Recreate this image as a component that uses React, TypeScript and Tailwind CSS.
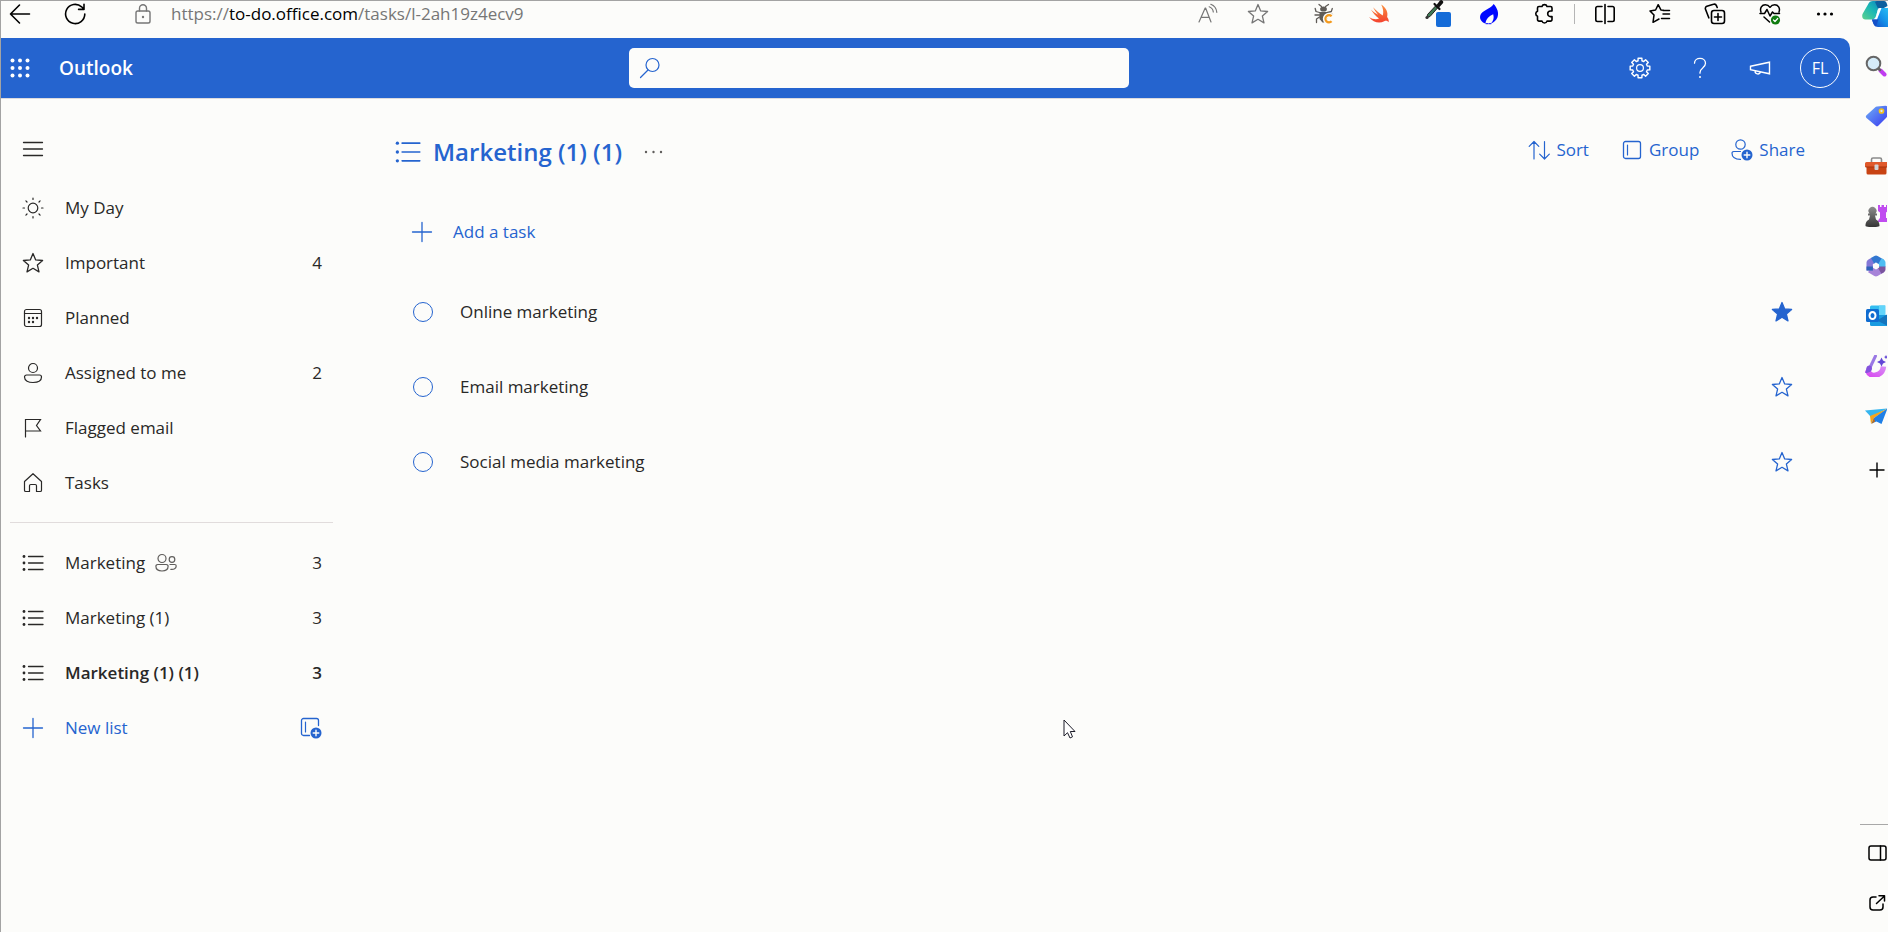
import React, { useState } from "react";

type IconProps = { size?: number; className?: string; children?: React.ReactNode };

function Icon({ size = 22, className = "", children }: IconProps) {
  return (
    <svg
      width={size}
      height={size}
      viewBox="0 0 22 22"
      fill="none"
      stroke="currentColor"
      strokeWidth={1.2}
      strokeLinecap="round"
      strokeLinejoin="round"
      aria-hidden="true"
      className={`flex-none ${className}`}
    >
      {children}
    </svg>
  );
}

const STAR = "M11 1.5 L13.7 7.9 L20.6 8.5 L15.4 13.1 L17 19.9 L11 16.3 L5 19.9 L6.6 13.1 L1.4 8.5 L8.3 7.9 Z";

/* ---------- browser toolbar icons ---------- */

const BackIcon = () => (
  <Icon><path strokeWidth="1.6" d="M20.5 11H1.5M10.5 2 1.5 11l9 9" /></Icon>
);
const RefreshIcon = () => (
  <Icon><path strokeWidth="1.6" d="M20.8 11a9.6 9.6 0 1 1-3.2-7.2L19.8 6M20 1.2V6.4H14.6" /></Icon>
);
const LockIcon = () => (
  <Icon className="text-[#767676]">
    <rect x="4" y="8" width="14" height="12" rx="1.8" strokeWidth="1.4" />
    <path strokeWidth="1.4" d="M7.5 8V5.2a3.5 3.5 0 0 1 7 0V8" />
    <circle cx="11" cy="14" r="1.2" fill="currentColor" stroke="none" />
  </Icon>
);
const ReadAloudIcon = () => (
  <Icon className="text-[#767676]">
    <path d="M2 19 8.2 5h.4L14 19M4.2 14.3h8M12.2 3.8c2.4.9 3.8 2.6 4.1 5.2M13.8 1.3c3.4 1.3 5.6 4.1 6 8" />
  </Icon>
);
const StarGreyIcon = () => (
  <Icon className="text-[#767676]"><path strokeWidth="1.3" d={STAR} /></Icon>
);
const BugIcon = () => (
  <Icon className="text-[#5f5b57]">
    <ellipse cx="10.5" cy="6" rx="3.4" ry="2.6" fill="currentColor" stroke="none" />
    <path d="M6.5 9h8.5v6l-2 4.5h-3.5L6.5 16Z" fill="currentColor" stroke="none" />
    <path strokeWidth="1.3" d="M8.5 3.5 6 1.5M12.5 3.5l3-2M6.5 9.500 3 8.5 2.2 5.5M14.5 9.5l3.8-1 1-3M6.5 12H2M15 11.5h4.5M6.5 14 3.5 16v3.5" />
    <path stroke="#fcfcfa" strokeWidth="5" d="M18.5 13.3a3.6 3.6 0 1 0 0 5" />
    <path stroke="#f39a1e" strokeWidth="2.2" strokeLinecap="butt" d="M18.6 13.3a3.6 3.6 0 1 0 0 5" />
  </Icon>
);
const SwiftIcon = () => (
  <Icon>
    <defs>
      <linearGradient id="swift" x1="0" y1="0" x2="0" y2="1">
        <stop stopColor="#f98f3e" />
        <stop offset="1" stopColor="#f4432f" />
      </linearGradient>
    </defs>
    <path
      fill="url(#swift)"
      stroke="none"
      d="M13.2 1.5c5 3.300 7.200 8 5.900 12.400 1.600 2 2 4 1.300 5.300-1.200-1.600-2.600-1.600-4.200-.9-4.400 2.300-10.900 1.600-15.200-4.300 3.600 2.200 7.300 2.900 10 1.500C7.500 12.900 4.800 9.400 2.800 6.400c2.700 2.300 5.400 4.300 7.300 5.300C8 9.300 6.300 6.700 5 4.300c3 3.200 6.300 6 9.800 8.200 1-3.600.3-7.600-1.600-11Z"
    />
  </Icon>
);
const DropperIcon = () => (
  <svg width="34" height="36" viewBox="-7 -4 34 36" aria-hidden="true" className="flex-none">
    <path d="m3 17.500.500-3L11.500 6l2 2L6 16.500l-3 1Z" fill="#3f7a55" stroke="#222" strokeWidth="1" />
    <path d="m10.500 4 5 5" stroke="#111" strokeWidth="2.200" strokeLinecap="round" />
    <path d="m12.500 5 3.300-4.200a1.900 1.900 0 0 1 2.900 2.600L15 7.500Z" fill="#111" />
    <circle cx="3" cy="17.500" r="1.600" fill="#333" />
    <rect x="12" y="12" width="15" height="15" rx="2" fill="#156cd8" />
  </svg>
);
const FlameIcon = () => (
  <Icon>
    <path
      fill="#0008ff"
      stroke="none"
      d="M15.700 1c3.700 4.200 5.400 9 3.800 13.200-1.100 3-3.400 5.200-6.600 6.300 2.500-2.600 3.400-5.500 2.300-9.200-4 1.700-7.200 4.600-7.700 9.300C3.300 19 1.500 16.200 2.200 12.800 3.300 7.500 11.800 6.600 15.700 1Z"
    />
    <path stroke="#0008ff" strokeWidth="1" strokeDasharray="2 1" d="M8 20.700h5" />
  </Icon>
);
const PuzzleIcon = () => (
  <Icon>
    <path
      strokeWidth="1.6"
      d="M6 3.500h3a2.600 2.600 0 0 1 5 0h3.500a1.500 1.500 0 0 1 1.500 1.500v3h-1.500a2.800 2.800 0 0 0 0 5.600H19v3a1.500 1.500 0 0 1-1.500 1.500H14a2.600 2.600 0 0 1-5 0H6a1.500 1.500 0 0 1-1.500-1.500v-3.400a2.600 2.600 0 0 1 0-4.900V5A1.500 1.500 0 0 1 6 3.500Z"
    />
  </Icon>
);
const SplitIcon = () => (
  <Icon>
    <path strokeWidth="1.6" d="M8 3.500H3.500a1.700 1.700 0 0 0-1.700 1.700v11.600a1.700 1.700 0 0 0 1.700 1.700H8M14 3.500h4.500a1.700 1.700 0 0 1 1.700 1.700v11.600a1.700 1.700 0 0 1-1.700 1.700H14M11 1.500v19" />
  </Icon>
);
const FavoritesIcon = () => (
  <Icon>
    <path strokeWidth="1.5" d="m14.500 7.300-2.600-.4L9.200 1.700 6.600 7 1 7.900l4 4.200-1 7.200 6-3.300M14 11h6.500M14 7.500h6.500M12.500 15.500h8" />
  </Icon>
);
const CollectionsIcon = () => (
  <Icon>
    <rect x="7.5" y="7.5" width="13" height="13" rx="2.5" strokeWidth="1.6" />
    <path strokeWidth="1.6" d="M14 10.500v7M10.500 14h7M4.800 14.800 1.500 6.300a2.300 2.300 0 0 1 1.400-3l6.600-2a2.300 2.300 0 0 1 2.900 1.300l.8 1.900" />
  </Icon>
);
const HealthIcon = () => (
  <Icon>
    <path strokeWidth="1.5" d="M2 9C.5 5 3 1.700 6.300 1.700c2.200 0 3.600 1 4.700 2.600 1.100-1.600 2.500-2.600 4.700-2.600C19 1.700 21.500 5 20 9M1 10.500h4.500L8 6.500l3 6.500 2.500-4 1.500 1.500h5.500M5 14l5.500 5" />
    <circle cx="16.5" cy="17" r="4.6" fill="#107c10" stroke="none" />
    <path stroke="#fff" d="m14.500 17 1.500 1.500 2.700-3" />
  </Icon>
);
const BrowserMoreIcon = () => (
  <Icon>
    <g fill="currentColor" stroke="none">
      <circle cx="4.5" cy="11" r="1.6" /><circle cx="11" cy="11" r="1.6" /><circle cx="17.5" cy="11" r="1.6" />
    </g>
  </Icon>
);

/* ---------- app icons ---------- */

const LauncherIcon = () => (
  <Icon>
    <g fill="currentColor" stroke="none">
      {[3.5, 11, 18.5].map((y) => [3.5, 11, 18.5].map((x) => <circle key={`${x}-${y}`} cx={x} cy={y} r="2" />))}
    </g>
  </Icon>
);
const SearchIcon = () => (
  <Icon><circle cx="13.5" cy="8" r="6.5" /><path d="M9 13 1.500 20.500" /></Icon>
);
const GEAR_TEETH = [0, 45, 90, 135, 180, 225, 270, 315];
const GearIcon = () => (
  <Icon>
    <circle cx="11" cy="11" r="3.4" />
    <path
      strokeWidth="1.4"
      d={
        GEAR_TEETH.map((deg, i) => {
          const at = (r: number, d: number) => {
            const a = ((deg + d) * Math.PI) / 180;
            return `${(11 + r * Math.cos(a)).toFixed(2)} ${(11 + r * Math.sin(a)).toFixed(2)}`;
          };
          return `${i ? "L" : "M"}${at(7.5, -15)} L${at(10, -11)} L${at(10, 11)} L${at(7.5, 15)}`;
        }).join(" ") + "Z"
      }
    />
  </Icon>
);
const HelpIcon = () => (
  <Icon>
    <path strokeWidth="1.3" d="M5.500 6.200C5.500 3.200 8 1.300 11 1.300s5.500 1.900 5.500 4.900c0 2.500-1.500 3.700-3 5C12 12.400 11 13.300 11 15.500v.7" />
    <circle cx="11" cy="20" r="1" fill="currentColor" stroke="none" />
  </Icon>
);
const MegaphoneIcon = () => (
  <Icon>
    <path strokeWidth="1.4" strokeLinejoin="miter" d="M1.500 9.200 20.500 5.200v11.600L1.500 12.800ZM6 13.900a2.900 2.900 0 0 0 5.600 1.200" />
  </Icon>
);
const MenuIcon = () => (
  <Icon><path strokeWidth="1.3" d="M1.500 4.500h19M1.500 11h19M1.500 17.500h19" /></Icon>
);
const SunIcon = () => (
  <Icon>
    <circle cx="11" cy="11" r="4.8" />
    <path d="M11 1v1.500M11 19.500V21M1 11h1.500M19.500 11H21M3.900 3.900 5 5M17 17l1.100 1.100M3.900 18.100 5 17M17 5l1.100-1.100" />
  </Icon>
);
const StarIcon = ({ filled = false }: { filled?: boolean }) => (
  <Icon><path strokeWidth="1.3" fill={filled ? "currentColor" : "none"} d={STAR} /></Icon>
);
const CalendarIcon = () => (
  <Icon>
    <rect x="2.5" y="2.5" width="17" height="17" rx="2" />
    <path d="M2.500 6.500h17" />
    <g fill="currentColor" stroke="none">
      <circle cx="7" cy="11" r="1.2" /><circle cx="11" cy="11" r="1.2" /><circle cx="15" cy="11" r="1.2" />
      <circle cx="7" cy="15" r="1.2" /><circle cx="11" cy="15" r="1.2" />
    </g>
  </Icon>
);
const PersonIcon = () => (
  <Icon>
    <circle cx="11" cy="6" r="4.5" />
    <path d="M4.500 13h13a2 2 0 0 1 2 2c0 3.800-4 5.500-8.500 5.500S2.500 18.800 2.500 15a2 2 0 0 1 2-2Z" />
  </Icon>
);
const FlagIcon = () => (
  <Icon><path strokeLinejoin="miter" d="M3.500 20V2.500h15l-4 6 4 5.500h-15" /></Icon>
);
const HomeIcon = () => (
  <Icon>
    <path d="M2.500 9.500 11 1.700l8.500 7.800v8.700a1.300 1.300 0 0 1-1.300 1.300h-3.700v-5.700a1.300 1.300 0 0 0-1.300-1.300H8.800a1.300 1.300 0 0 0-1.300 1.300v5.700H3.800a1.300 1.300 0 0 1-1.300-1.300Z" />
  </Icon>
);
const ListIcon = ({ heading = false }: { heading?: boolean }) => (
  <Icon size={heading ? 26 : 22}>
    <path strokeWidth="1.3" d={heading ? "M6 3.500h15M6 11h15M6 18.500h15" : "M6.500 4.500h14.500M6.500 11h14.500M6.500 17.500h14.500"} />
    <g fill="currentColor" stroke="none">
      {(heading ? [3.5, 11, 18.5] : [4.5, 11, 17.5]).map((y) => <circle key={y} cx="2" cy={y} r="1.4" />)}
    </g>
  </Icon>
);
const PeopleIcon = () => (
  <Icon className="text-[#605e5c]">
    <circle cx="7" cy="6.5" r="4" />
    <path d="M2.700 12.500h8.600a1.800 1.800 0 0 1 1.800 1.800c0 3-2.600 4.700-6.100 4.700S.9 17.300.9 14.300a1.800 1.800 0 0 1 1.800-1.800Z" />
    <circle cx="17" cy="7.5" r="2.8" />
    <path d="M15 12.500h4.700a1.500 1.500 0 0 1 1.500 1.500c0 2.500-2.400 3.700-5.400 3.300" />
  </Icon>
);
const PlusIcon = () => (
  <Icon><path strokeWidth="1.3" d="M11 1.500v19M1.500 11h19" /></Icon>
);
const SortIcon = () => (
  <Icon><path d="M6 20V2.500M1.200 7.300 6 2.500l4.800 4.800M16.500 2.500V20M11.700 15.200l4.800 4.800 4.800-4.800" /></Icon>
);
const GroupIcon = () => (
  <Icon><rect x="2.5" y="2.5" width="17" height="17" rx="2" strokeWidth="1.3" /><path d="M6.500 6v10" /></Icon>
);
const Badge = () => (
  <>
    <circle cx="16" cy="16" r="5.5" fill="currentColor" stroke="none" />
    <path stroke="#fcfcfa" strokeWidth="1.4" d="M16 13.200v5.600M13.200 16h5.600" />
  </>
);
const NewGroupIcon = () => (
  <Icon>
    <path strokeWidth="1.3" d="M9.500 18.500h-6a2 2 0 0 1-2-2v-13a2 2 0 0 1 2-2h13a2 2 0 0 1 2 2v5" />
    <path d="M5.500 5v10" />
    <Badge />
  </Icon>
);
const ShareIcon = () => (
  <Icon>
    <circle cx="9.5" cy="5.5" r="4.7" />
    <path d="M9.500 12.500H2.700a1.700 1.700 0 0 0-1.700 1.700c0 4 3.500 6 8.500 6.200" />
    <Badge />
  </Icon>
);
const MoreIcon = () => (
  <Icon className="text-[#605e5c]">
    <g fill="currentColor" stroke="none">
      <circle cx="3" cy="11" r="1.2" /><circle cx="10.5" cy="11" r="1.2" /><circle cx="18" cy="11" r="1.2" />
    </g>
  </Icon>
);

/* ---------- side rail icons ---------- */

const CopilotIcon = () => (
  <svg width="28" height="26" viewBox="0 0 28 26" aria-hidden="true" className="flex-none">
    <defs>
      <linearGradient id="cpA" x1="0" y1="1" x2="1" y2="0">
        <stop stopColor="#5fd18b" /><stop offset=".5" stopColor="#1cb8b4" /><stop offset="1" stopColor="#0a7fc4" />
      </linearGradient>
      <linearGradient id="cpB" x1="0" y1="1" x2="1" y2="0">
        <stop stopColor="#1546c8" /><stop offset=".5" stopColor="#1590e8" /><stop offset="1" stopColor="#2bc3f5" />
      </linearGradient>
    </defs>
    <path d="M6 3.500C7 1 8.500 0 11 0h9.500c-2 .8-3.200 3.300-4 6.500l-2.200 8c-.8 2.700-2 4-4.500 4H3.500C.5 18.500-.3 16 .5 13Z" fill="url(#cpA)" />
    <path d="M15 0h7c2 0 3 2 3.500 5L21 7.500h-5L13 1Z" fill="#0d5f9e" />
    <path d="M21 7h7v19H16c-3.500 0-4.500-3-6-7.500 2.500 0 3.700-1.500 4.500-4l1.500-5C16.700 7.500 18 7 21 7Z" fill="url(#cpB)" />
    <path d="M10 18.500h5L19.500 7H18c-1.500 0-2 1-2.400 2.500l-1.400 5c-.7 2.500-1.800 4-4.200 4Z" fill="#fff" />
    <path d="M10 18.500h6.500l-2.500 7c-2-.5-3-3.500-4-7Z" fill="#1450c8" />
  </svg>
);
const RailSearchIcon = () => (
  <Icon>
    <path d="m15.500 15.500 4 4" stroke="#c03df0" strokeWidth="4" />
    <path d="m13 13 2 2" stroke="#666" strokeWidth="2.5" />
    <circle cx="8.5" cy="8.5" r="6.8" fill="#d5ecf9" stroke="#666" strokeWidth="2" />
  </Icon>
);
const TagIcon = () => (
  <Icon>
    <defs><linearGradient id="tag" x1="0" y1="0" x2="1" y2="1"><stop stopColor="#6fb0f5" /><stop offset="1" stopColor="#3838f0" /></linearGradient></defs>
    <path d="M12 1.500 20.500.8a2 2 0 0 1 2 2V10a4 4 0 0 1-1 2.500l-8 8a2 2 0 0 1-3 0L1.500 13a2 2 0 0 1 0-2.800L10 2.500a4 4 0 0 1 2-1Z" fill="url(#tag)" stroke="none" />
    <circle cx="16.5" cy="6" r="2" fill="#d8e6ff" stroke="#f2c21a" strokeWidth="1.7" />
  </Icon>
);
const ToolboxIcon = () => (
  <Icon>
    <path d="M6.500 7V4.500A1.500 1.500 0 0 1 8 3h7a1.500 1.500 0 0 1 1.500 1.500V7" stroke="#8a8a8a" strokeWidth="1.6" />
    <path d="M1.500 11h20v7a1.500 1.500 0 0 1-1.500 1.500H3A1.500 1.500 0 0 1 1.500 18Z" fill="#c84313" stroke="none" />
    <path d="M0 8.500A1.500 1.500 0 0 1 1.500 7H23v5H0Z" fill="#e0592a" stroke="none" />
    <path d="M1 12h21" stroke="#a8350c" strokeWidth="1" />
    <rect x="9.5" y="9.5" width="4" height="5.5" rx="1" fill="#cfd3d6" stroke="none" />
  </Icon>
);
const ChessIcon = () => (
  <Icon>
    <defs><linearGradient id="pawn" x1="0" y1="0" x2="0" y2="1"><stop stopColor="#8d8d8d" /><stop offset="1" stopColor="#353535" /></linearGradient></defs>
    <path d="M13 0h2v2h1.500V0h2.500v2h2V0h2v6l-2 1.500V13h2v4H12.500l1.500-3 1-1V7.500L13 6Z" fill="#c04cf0" stroke="none" />
    <path d="M4 14.500 5 10.500H3v-2h1.500a4 4 0 1 1 6 0H12v2h-2l1 4c2 1 3.500 2.500 3.500 6.500 0 1.500-14 1.500-14 0 0-4 1.500-5.500 3.500-6.500Z" fill="url(#pawn)" stroke="none" />
  </Icon>
);
const M365Icon = () => (
  <Icon>
    <g strokeWidth="6.4" strokeLinecap="butt">
      <path d="M17.300 14.600 11 18.300 4.700 14.600" stroke="#a783d8" />
      <path d="M4.700 15.500V7.400L8 5.500" stroke="#8478d6" />
      <path d="M4.700 11.500v4" stroke="#2f62b8" />
      <path d="M7.500 5.700 11 3.700l6.300 3.700" stroke="#3277d0" />
      <path d="M15 6 17.300 7.400V12" stroke="#4dbdf2" />
      <path d="M17.300 11.500v3.100l-2.500 1.500" stroke="#7a559f" />
    </g>
  </Icon>
);
const OutlookIcon = () => (
  <Icon>
    <path d="M5 2a1.500 1.500 0 0 1 1.500-1.500H20V11H5Z" fill="#33bdf0" stroke="none" />
    <path d="M14 .5h6.500V10H14Z" fill="#62d4fa" stroke="none" />
    <path d="M5 10h17v11H6.500A1.500 1.500 0 0 1 5 19.500Z" fill="#199be0" stroke="none" />
    <path d="M12 15.500 22 9.500v11Z" fill="#1474bd" stroke="none" />
    <rect x="1" y="4" width="13" height="13" rx="1.5" fill="#0f6cd0" stroke="none" />
    <ellipse cx="7.5" cy="10.5" rx="3" ry="3.5" stroke="#fff" strokeWidth="2" />
  </Icon>
);
const DesignerIcon = () => (
  <Icon>
    <defs><linearGradient id="dsg" x1="0" y1="1" x2="1" y2="0"><stop stopColor="#d84cf0" /><stop offset="1" stopColor="#d88cf5" /></linearGradient></defs>
    <path d="M2.500 15C4 20 8 21 11.500 20c4-1 6.500-4 7-8.500" stroke="url(#dsg)" strokeWidth="5.500" strokeLinecap="butt" />
    <path d="M10.500 1 5.500 11.500" stroke="#9a78e4" strokeWidth="3" />
    <path d="M2 11.500c2.500-2 5-.5 5 2 0 3-3 4.500-7 4.500 1.500-1.500.5-4.500 2-6.500Z" fill="#8453dd" stroke="none" />
    <path d="M16.500 2.500 18 5.500l3 1.500-3 1.500-1.500 3L15 8.500 12 7l3-1.500ZM21 0l.8 1.500L23 2l-1.200.8L21 4l-.8-1.200L19 2l1.200-.5Z" fill="#6246d6" stroke="none" />
  </Icon>
);
const PlaneIcon = () => (
  <Icon>
    <path d="M0 5.500 22.500 3.500 6 12Z" fill="#35b5ef" stroke="none" />
    <path d="m5 11 18-7.500L9 13l-3 6Z" fill="#f5a51c" stroke="none" />
    <path d="M9 13 22.500 3.500 16.500 19l-5-2.500-5 2Z" fill="#1f7fe6" stroke="none" />
    <path d="m9 13-2.500 6 3.500-2.500Z" fill="#c56a12" stroke="none" />
  </Icon>
);
const RailPlusIcon = () => (
  <Icon><path strokeWidth="1.4" strokeLinecap="butt" d="M11 3.500v15M3.500 11h15" /></Icon>
);
const PanelIcon = () => (
  <Icon><rect x="3" y="4" width="17" height="14" rx="2" strokeWidth="1.5" /><path strokeWidth="1.5" d="M14.500 4v14" /></Icon>
);
const ExternalIcon = () => (
  <Icon><path strokeWidth="1.5" d="M10 5H7a3 3 0 0 0-3 3v7a3 3 0 0 0 3 3h7a3 3 0 0 0 3-3v-3M10.500 11.500 18.500 4M13 3.700h5.500V9" /></Icon>
);

/* ---------- data ---------- */

const smartLists = [
  { label: "My Day", icon: <SunIcon /> },
  { label: "Important", icon: <StarIcon />, count: 4 },
  { label: "Planned", icon: <CalendarIcon /> },
  { label: "Assigned to me", icon: <PersonIcon />, count: 2 },
  { label: "Flagged email", icon: <FlagIcon /> },
  { label: "Tasks", icon: <HomeIcon /> },
];

const ownLists = [
  { label: "Marketing", count: 3, shared: true },
  { label: "Marketing (1)", count: 3 },
  { label: "Marketing (1) (1)", count: 3, active: true },
];

const initialTasks = [
  { id: "online", title: "Online marketing", starred: true },
  { id: "email", title: "Email marketing", starred: false },
  { id: "social", title: "Social media marketing", starred: false },
];

const extensionButtons = [
  { label: "Bug inspector", icon: <BugIcon /> },
  { label: "Swift", icon: <SwiftIcon /> },
  { label: "Color picker", icon: <DropperIcon /> },
  { label: "Flame", icon: <FlameIcon /> },
  { label: "Extensions", icon: <PuzzleIcon /> },
];

const browserButtons = [
  { label: "Split screen", icon: <SplitIcon /> },
  { label: "Favorites", icon: <FavoritesIcon /> },
  { label: "Collections", icon: <CollectionsIcon /> },
  { label: "Browser essentials", icon: <HealthIcon /> },
  { label: "Settings and more", icon: <BrowserMoreIcon /> },
];

const railButtons = [
  { label: "Search", icon: <RailSearchIcon /> },
  { label: "Shopping", icon: <TagIcon /> },
  { label: "Tools", icon: <ToolboxIcon /> },
  { label: "Games", icon: <ChessIcon /> },
  { label: "Microsoft 365", icon: <M365Icon /> },
  { label: "Outlook", icon: <OutlookIcon /> },
  { label: "Designer", icon: <DesignerIcon /> },
  { label: "Drop", icon: <PlaneIcon /> },
];

const headerButtons = [
  { label: "Settings", icon: <GearIcon /> },
  { label: "Help", icon: <HelpIcon /> },
  { label: "What's new", icon: <MegaphoneIcon /> },
];

const commands = [
  { label: "Sort", icon: <SortIcon /> },
  { label: "Group", icon: <GroupIcon /> },
  { label: "Share", icon: <ShareIcon /> },
];

/* ---------- sections ---------- */

function ToolButton({ label, icon }: { label: string; icon: React.ReactNode }) {
  return (
    <button type="button" aria-label={label} className="flex h-[26px] w-[50px] flex-none items-center justify-center">
      {icon}
    </button>
  );
}

function BrowserBar() {
  return (
    <div className="flex h-[37px] items-start text-black">
      <div className="flex h-[26px] min-w-0 flex-1 items-center pl-2">
        <button type="button" aria-label="Back"><BackIcon /></button>
        <button type="button" aria-label="Refresh" className="ml-[33px]"><RefreshIcon /></button>
        <button type="button" aria-label="Site information" className="ml-[46px]"><LockIcon /></button>
        <div className="ml-[17px] truncate text-[17px] leading-6 text-[#767676]">
          https://<span className="text-black">to-do.office.com</span>/tasks/l-2ah19z4ecv9
        </div>
      </div>
      <div className="mr-4 flex">
        <ToolButton label="Read aloud" icon={<ReadAloudIcon />} />
        <ToolButton label="Add to favorites" icon={<StarGreyIcon />} />
      </div>
      <div className="flex h-[26px] items-center gap-[5px]">
        {extensionButtons.map((b) => <ToolButton key={b.label} {...b} />)}
        <div className="h-5 w-px bg-[#b5b5b5]" />
        {browserButtons.map((b) => <ToolButton key={b.label} {...b} />)}
      </div>
    </div>
  );
}

function AppHeader() {
  return (
    <header className="flex h-[61px] items-center rounded-tr-[10px] border-b border-[#dcdade] bg-[#2564cf] text-white">
      <div className="flex min-w-0 basis-[628px] items-center gap-[21px]">
        <button type="button" aria-label="App launcher" className="flex h-[60px] w-[37px] items-center justify-center">
          <LauncherIcon />
        </button>
        <a href="#outlook" className="text-[19px] leading-6 font-semibold">Outlook</a>
      </div>
      <label className="flex h-10 min-w-0 basis-[500px] items-center gap-2 rounded-[5px] bg-[#fcfcfa] px-2.5 text-[#2564cf]">
        <SearchIcon />
        <input type="search" aria-label="Search" className="min-w-0 flex-1 bg-transparent text-[17px] outline-none" />
      </label>
      <div className="ml-auto flex flex-none">
        {headerButtons.map((b) => (
          <button key={b.label} type="button" aria-label={b.label} className="flex h-[60px] w-[60px] items-center justify-center">
            {b.icon}
          </button>
        ))}
        <button type="button" aria-label="Account" className="m-2.5 h-10 w-10 rounded-full border border-white text-[16px] leading-5">
          FL
        </button>
      </div>
    </header>
  );
}

function Sidebar() {
  return (
    <nav aria-label="Lists" className="w-[342px] flex-none pr-[10px] pl-[9px] text-[17px] leading-6 text-[#292827]">
      <div className="flex h-[81px] items-start px-3 pt-[39px]">
        <button type="button" aria-label="Toggle sidebar"><MenuIcon /></button>
      </div>
      <ul>
        {smartLists.map((l) => (
          <li key={l.label}>
            <a href="#list" className="flex h-[55px] items-center gap-[21px] pr-[11px] pl-3">
              {l.icon}
              <span className="flex-1">{l.label}</span>
              <span>{l.count}</span>
            </a>
          </li>
        ))}
      </ul>
      <hr className="my-3 border-[#e1dcdc]" />
      <ul>
        {ownLists.map((l) => (
          <li key={l.label}>
            <a href="#list" className={`flex h-[55px] items-center gap-[21px] pr-[11px] pl-3 ${l.active ? "font-semibold" : ""}`}>
              <ListIcon />
              <span className="flex flex-1 items-center gap-2.5">
                {l.label}
                {l.shared && <PeopleIcon />}
              </span>
              <span>{l.count}</span>
            </a>
          </li>
        ))}
      </ul>
      <div className="flex h-[55px] items-center pr-[11px] pl-3 text-[#2564cf]">
        <button type="button" className="flex items-center gap-[21px]"><PlusIcon />New list</button>
        <button type="button" aria-label="New group" className="ml-auto"><NewGroupIcon /></button>
      </div>
    </nav>
  );
}

function TaskPane() {
  const [tasks, setTasks] = useState(initialTasks);
  const toggleStar = (id: string) =>
    setTasks((all) => all.map((t) => (t.id === id ? { ...t, starred: !t.starred } : t)));

  return (
    <main className="min-w-0 flex-1 pr-[45px] pl-[52px]">
      <div className="flex h-[95px] items-start pt-[33px] text-[#2564cf]">
        <div className="flex h-10 items-center">
          <ListIcon heading />
          <h1 className="ml-3 text-[24px] leading-8 font-semibold">Marketing (1) (1)</h1>
          <button type="button" aria-label="List options" className="ml-[21px]"><MoreIcon /></button>
        </div>
        <div className="ml-auto flex h-9 items-center gap-8 text-[17px] leading-6">
          {commands.map((c) => (
            <button key={c.label} type="button" className="flex items-center gap-1.5">{c.icon}{c.label}</button>
          ))}
        </div>
      </div>
      <button type="button" className="mb-[5px] flex h-[75px] w-full items-center gap-5 pl-4 text-[17px] leading-6 text-[#2564cf]">
        <PlusIcon />Add a task
      </button>
      <ul className="text-[17px] leading-6 text-[#292827]">
        {tasks.map((t) => (
          <li key={t.id} className="flex h-[75px] items-center gap-[27px] pr-3 pl-[18px]">
            <input
              id={t.id}
              type="checkbox"
              className="h-5 w-5 flex-none appearance-none rounded-full border border-[#2564cf] checked:bg-[#2564cf]"
            />
            <label htmlFor={t.id} className="flex-1">{t.title}</label>
            <button type="button" aria-label={`Mark ${t.title} as important`} onClick={() => toggleStar(t.id)} className="text-[#2564cf]">
              <StarIcon filled={t.starred} />
            </button>
          </li>
        ))}
      </ul>
    </main>
  );
}

function SideRail() {
  return (
    <aside className="flex w-[38px] flex-none flex-col overflow-hidden text-black">
      <button type="button" aria-label="Copilot" className="ml-3 flex h-10 w-7 flex-none items-start">
        <CopilotIcon />
      </button>
      {railButtons.map((b) => (
        <button key={b.label} type="button" aria-label={b.label} className="flex h-[50px] flex-none items-center pl-[15px]">
          {b.icon}
        </button>
      ))}
      <button type="button" aria-label="Customize" className="mt-1 flex h-[50px] flex-none items-center pl-4">
        <RailPlusIcon />
      </button>
      <div className="mt-auto ml-2.5 flex-none border-t border-[#a8a8a8] pt-[3px] pb-1">
        {[
          { label: "Hide sidebar", icon: <PanelIcon /> },
          { label: "Open in new window", icon: <ExternalIcon /> },
        ].map((b) => (
          <button key={b.label} type="button" aria-label={b.label} className="flex h-[50px] w-7 items-center pl-1.5">
            {b.icon}
          </button>
        ))}
      </div>
    </aside>
  );
}

export default function App() {
  return (
    <div className="relative flex min-h-screen border-t border-l border-[#a3a3a3] bg-[#fcfcfa] font-['Open_Sans','Noto_Sans',sans-serif]">
      <div className="flex min-w-0 flex-1 flex-col">
        <BrowserBar />
        <AppHeader />
        <div className="flex flex-1">
          <Sidebar />
          <TaskPane />
        </div>
      </div>
      <SideRail />
      <svg width="14" height="21" viewBox="0 0 14 21" aria-hidden="true" className="pointer-events-none absolute top-[718px] left-[1062px]">
        <path d="M1 1v16l3.500-3.300L7 19l2.500-1.200L7.300 12.500H12Z" fill="#fff" stroke="#1c1c28" strokeWidth="1" />
      </svg>
    </div>
  );
}
